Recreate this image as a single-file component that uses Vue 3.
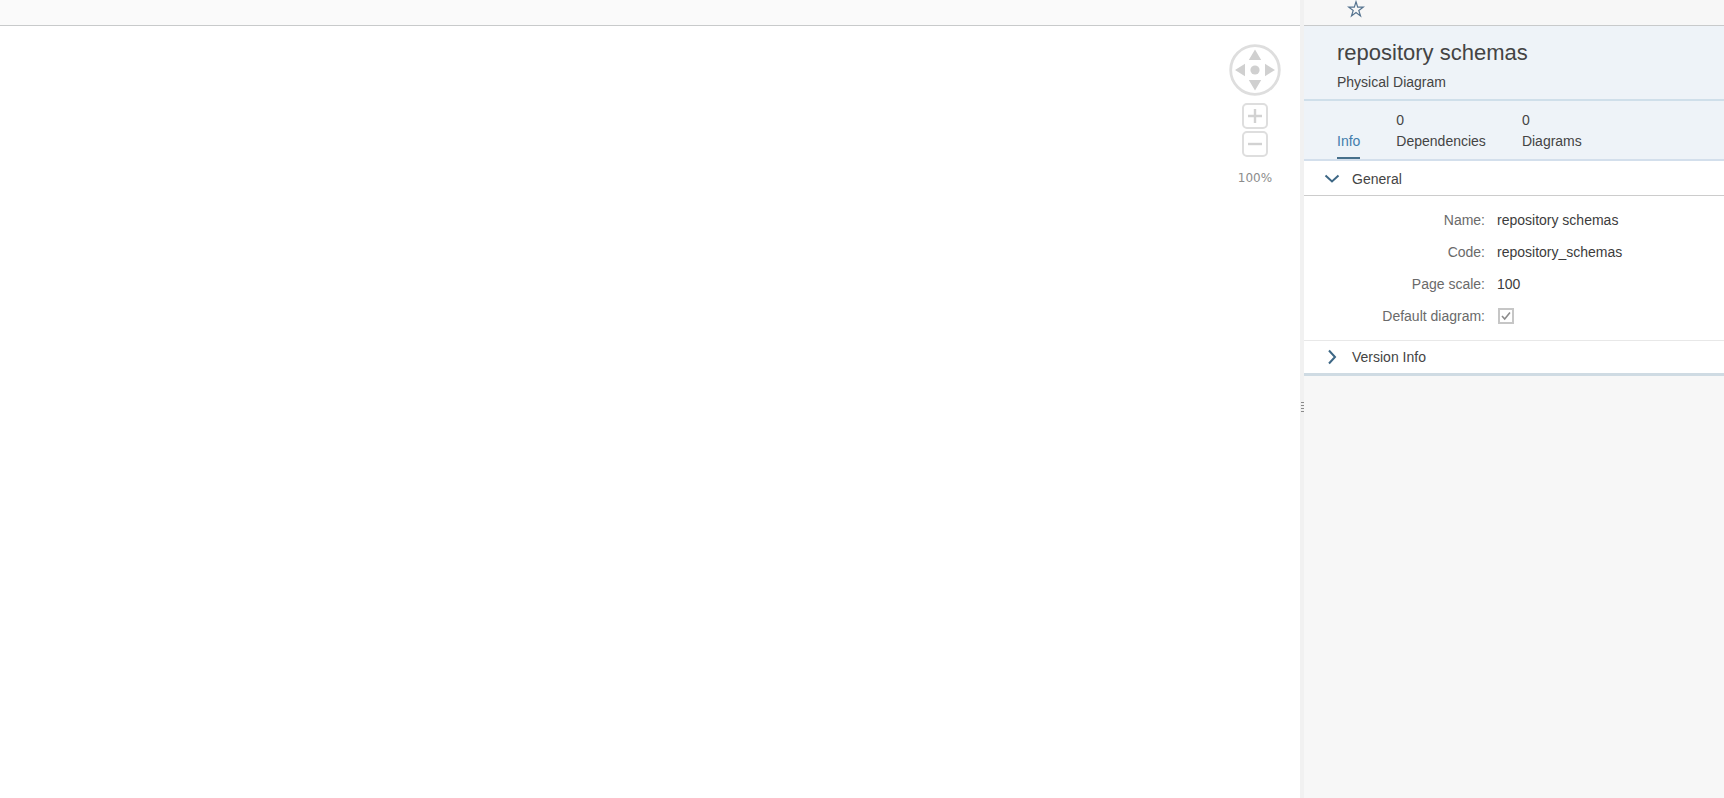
<script setup>
import { ref } from 'vue'

const activeTab = ref('Info')
const tabs = [
  { name: 'Info', count: '' },
  { name: 'Dependencies', count: '0' },
  { name: 'Diagrams', count: '0' },
]
const fields = [
  { id: 'name', label: 'Name:', value: 'repository schemas' },
  { id: 'code', label: 'Code:', value: 'repository_schemas' },
  { id: 'scale', label: 'Page scale:', value: '100' },
]
const generalOpen = ref(true)
</script>

<template>
  <div class="workspace">
    <main class="editor">
      <div class="toolbar"></div>
      <div class="canvas">
        <div class="navigator">
          <button class="pan" type="button" aria-label="Pan">
            <svg width="52" height="52" viewBox="0 0 52 52">
              <circle cx="26" cy="26" r="24.3" fill="#fff" stroke="#dedede" stroke-width="2.8" />
              <circle cx="26" cy="26" r="4.6" fill="#d0d0d0" />
              <path d="M26 5.500l6.200 10.500H19.800zM26 46.500l6.200-10.500H19.800zM6 26l10-6.200v12.400zM46 26l-10-6.200v12.400z" fill="#d0d0d0" />
            </svg>
          </button>
          <button class="zoom" type="button" aria-label="Zoom in">
            <svg width="26" height="26" viewBox="0 0 26 26">
              <rect x="1" y="1" width="24" height="24" rx="4" fill="#fff" stroke="#dedede" stroke-width="2" />
              <path d="M6 13h14M13 6v14" stroke="#d2d2d2" stroke-width="2.400" />
            </svg>
          </button>
          <button class="zoom" type="button" aria-label="Zoom out">
            <svg width="26" height="26" viewBox="0 0 26 26">
              <rect x="1" y="1" width="24" height="24" rx="4" fill="#fff" stroke="#dedede" stroke-width="2" />
              <path d="M6 13h14" stroke="#d2d2d2" stroke-width="2.400" />
            </svg>
          </button>
          <span class="level">100%</span>
        </div>
      </div>
    </main>

    <div class="splitter">
      <svg width="3" height="10" viewBox="0 0 3 10">
        <path d="M0 .5h3M0 3.500h3M0 6.500h3M0 9.500h3" stroke="#8a8a8a" />
      </svg>
    </div>

    <aside class="panel">
      <div class="actions">
        <button class="favorite" type="button" aria-label="Add to favorites">
          <svg width="18" height="18" viewBox="0 0 18 18">
            <path d="M9 1.800l1.700 5.400h5.500l-4.400 3.300 1.700 5.400L9 12.600l-4.500 3.300 1.700-5.400L1.800 7.200h5.500z" fill="none" stroke="#55738f" stroke-width="1.200" />
          </svg>
        </button>
      </div>
      <header class="heading">
        <h1>repository schemas</h1>
        <p>Physical Diagram</p>
      </header>
      <nav class="tabs">
        <button
          v-for="tab in tabs"
          :key="tab.name"
          type="button"
          class="tab"
          :class="{ active: tab.name === activeTab }"
          @click="activeTab = tab.name"
        >
          <span v-if="tab.count" class="count">{{ tab.count }}</span>
          <span>{{ tab.name }}</span>
        </button>
      </nav>
      <section class="group">
        <button class="group-title general" type="button" :aria-expanded="generalOpen" @click="generalOpen = !generalOpen">
          <svg width="16" height="16" viewBox="0 0 16 16">
            <path d="M1.500 4.500l6.500 6 6.500-6" fill="none" stroke="#3d6785" stroke-width="2" />
          </svg>
          <span>General</span>
        </button>
        <div v-if="generalOpen" class="form">
          <dl v-for="field in fields" :key="field.id" class="row">
            <dt>{{ field.label }}</dt>
            <dd>{{ field.value }}</dd>
          </dl>
          <div class="row">
            <label for="default-diagram">Default diagram:</label>
            <span class="check">
              <input id="default-diagram" type="checkbox" checked disabled />
              <svg width="10" height="10" viewBox="0 0 10 10">
                <path d="M1 5l2.700 3L9 1.500" fill="none" stroke="#8c8c8c" stroke-width="1.600" />
              </svg>
            </span>
          </div>
        </div>
      </section>
      <section class="group last">
        <button class="group-title" type="button" aria-expanded="false">
          <svg width="16" height="16" viewBox="0 0 16 16">
            <path d="M5 1.500l6 6.500-6 6.500" fill="none" stroke="#3d6785" stroke-width="2" />
          </svg>
          <span>Version Info</span>
        </button>
      </section>
    </aside>
  </div>
</template>

<style>
body {
  margin: 0;
}
</style>

<style scoped>
.workspace {
  display: grid;
  grid-template-columns: minmax(0, 1fr) 4px 420px;
  min-height: 100vh;
  font-family: "Liberation Sans", Arial, sans-serif;
  font-size: 14px;
  line-height: 20px;
  color: #444;
}

button {
  padding: 0;
  border: 0;
  background: none;
  font: inherit;
  color: inherit;
  text-align: left;
}

svg {
  display: block;
}

.editor {
  display: flex;
  flex-direction: column;
  background: #fff;
}

.toolbar,
.actions {
  box-sizing: border-box;
  height: 26px;
  border-bottom: 1px solid #c8cacb;
  background: #fafafa;
}

.canvas {
  display: flex;
  flex: 1;
  justify-content: flex-end;
  align-items: flex-start;
  padding: 18px 19px 0 0;
}

.navigator {
  display: flex;
  flex-direction: column;
  align-items: center;
}

.pan {
  margin-bottom: 7px;
}

.zoom {
  margin-bottom: 2px;
}

.level {
  margin-top: 9px;
  font-family: "DejaVu Sans", Verdana, sans-serif;
  font-size: 12px;
  color: #8c8c8c;
}

.splitter {
  display: flex;
  align-items: center;
  justify-content: flex-end;
  padding-top: 16px;
  box-sizing: border-box;
  background: #f1f1f1;
}

.panel {
  background: #f7f7f7;
}

.actions {
  padding-left: 43px;
  background: #f7f7f7;
}

.heading {
  padding: 14px 33px 7px;
  border-bottom: 2px solid #cfdfea;
  background: #eef3f8;
}

h1 {
  margin: 0 0 6px;
  font-size: 22px;
  font-weight: 400;
  line-height: 26px;
}

p {
  margin: 0;
}

.tabs {
  display: flex;
  align-items: flex-end;
  gap: 36px;
  height: 58px;
  padding: 0 33px;
  border-bottom: 2px solid #d3dfec;
  background: #eef3f8;
}

.tab {
  display: flex;
  flex-direction: column;
  padding-bottom: 6px;
  border-bottom: 2px solid transparent;
}

.tab.active {
  border-bottom-color: #47708b;
  color: #427cac;
}

.count {
  margin-bottom: 1px;
}

.group {
  background: #fff;
}

.group-title {
  display: flex;
  align-items: center;
  gap: 12px;
  width: 100%;
  height: 32px;
  padding-left: 20px;
}

.general {
  height: 35px;
  padding-top: 2px;
  border-bottom: 1px solid #ccc;
}

.form {
  padding: 8px 0;
}

.row {
  display: grid;
  grid-template-columns: 181px 1fr;
  column-gap: 12px;
  align-items: center;
  height: 32px;
  margin: 0;
}

dt,
label {
  text-align: right;
  color: #6a6a6a;
}

dd {
  margin: 0;
  color: #3c3c3c;
}

.check {
  display: grid;
  place-items: center;
  width: 18px;
}

.check > * {
  grid-area: 1 / 1;
}

input {
  appearance: none;
  box-sizing: border-box;
  width: 16px;
  height: 16px;
  margin: 0;
  border: 2px solid #c6c6c6;
  background: #fff;
}

.last {
  border-top: 1px solid #e8e8e8;
  border-bottom: 3px solid #cfdbe3;
}
</style>
